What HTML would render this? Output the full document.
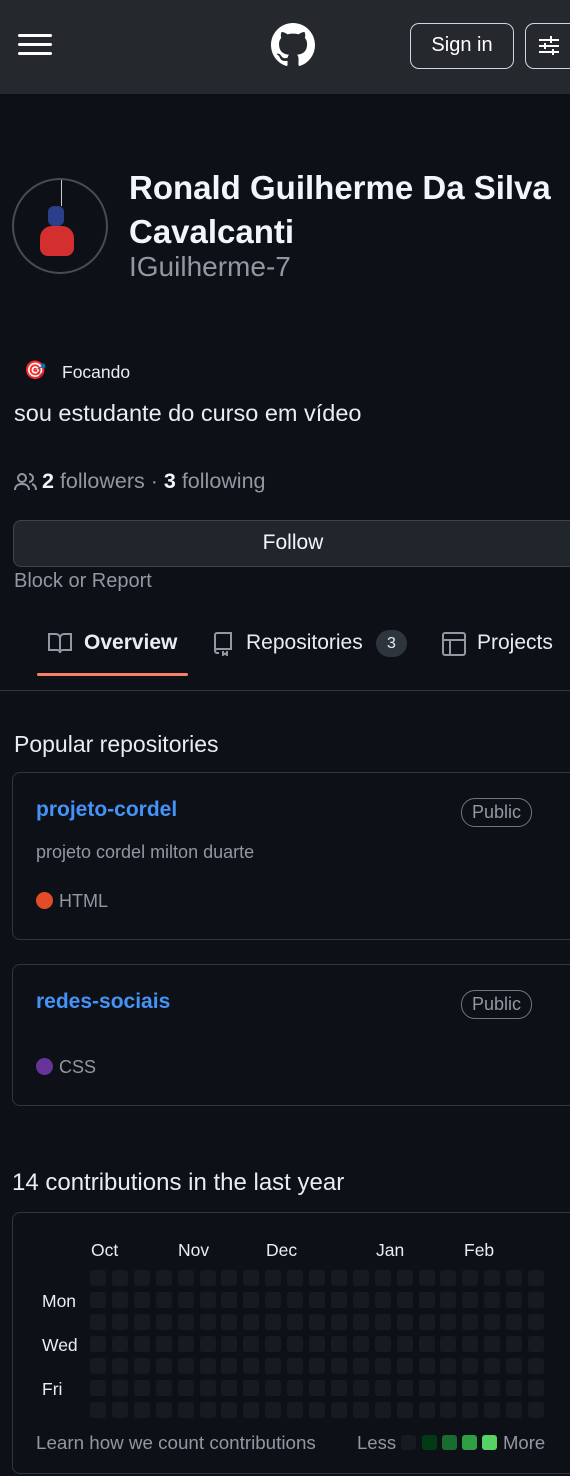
<!DOCTYPE html><html><head><meta charset="utf-8"><style>
*{box-sizing:border-box;margin:0;padding:0}
body{width:570px;height:1476px;background:#0d1117;color:#e6edf3;font-family:"Liberation Sans",sans-serif;position:relative;overflow:hidden}
.a{position:absolute}
.hdr{left:0;top:0;width:570px;height:94px;background:#25292e}
.btn{border:1.5px solid #d0d7de;border-radius:9px}
.card{border:1.5px solid #30363d;border-radius:8px;left:12px;width:570px}
.pub{border:1.5px solid #6e7681;border-radius:14px;color:#9198a1;font-size:18px;padding:3px 10px}
.cell{position:absolute;width:16px;height:16px;border-radius:3px;background:#161b22}
</style></head><body>
<div class="a hdr"></div>
<div class="a" style="left:18px;top:34px;width:34px;height:3px;background:#fff;border-radius:2px"></div>
<div class="a" style="left:18px;top:43px;width:34px;height:3px;background:#fff;border-radius:2px"></div>
<div class="a" style="left:18px;top:52px;width:34px;height:3px;background:#fff;border-radius:2px"></div>
<svg class="a" style="left:271px;top:23px" width="44" height="44" viewBox="0 0 16 16"><path fill="#fff" fill-rule="evenodd" d="M8 0C3.58 0 0 3.58 0 8c0 3.54 2.29 6.53 5.47 7.59.4.07.55-.17.55-.38 0-.19-.01-.82-.01-1.49-2.01.37-2.53-.49-2.69-.94-.09-.23-.48-.94-.82-1.13-.28-.15-.68-.52-.01-.53.63-.01 1.08.58 1.23.82.72 1.21 1.87.87 2.33.66.07-.52.28-.87.51-1.07-1.78-.2-3.64-.89-3.64-3.95 0-.87.31-1.59.82-2.15-.08-.2-.36-1.02.08-2.12 0 0 .67-.21 2.2.82.64-.18 1.32-.27 2-.27.68 0 1.36.09 2 .27 1.53-1.04 2.2-.82 2.2-.82.44 1.1.16 1.92.08 2.12.51.56.82 1.27.82 2.15 0 3.07-1.87 3.75-3.65 3.95.29.25.54.73.54 1.48 0 1.07-.01 1.93-.01 2.2 0 .21.15.46.55.38A8.013 8.013 0 0016 8c0-4.42-3.58-8-8-8z"/></svg>
<div class="a btn" style="left:410px;top:23px;width:104px;height:46px"></div>
<div class="a" style="left:410px;top:34px;width:104px;text-align:center;font-size:20px;color:#fff">Sign in</div>
<div class="a btn" style="left:525px;top:23px;width:60px;height:46px"></div>
<svg class="a" style="left:537px;top:34px" width="24" height="24" viewBox="0 0 24 24" stroke="#fff" stroke-width="2"><path d="M2 6h20M2 12h20M2 18h20M14 2v7M8 9v6M16 15v6"/></svg>
<div class="a" style="left:12px;top:178px;width:96px;height:96px;border-radius:50%;border:2px solid #444c56;background:#0d1117;overflow:hidden"><div class="a" style="left:26px;top:46px;width:34px;height:30px;background:#d32f2f;border-radius:12px 12px 8px 8px"></div><div class="a" style="left:34px;top:26px;width:16px;height:20px;background:#2a3f8a;border-radius:6px"></div><div class="a" style="left:47px;top:0;width:1px;height:26px;background:#ccc"></div></div>
<div class="a" style="left:129px;top:166px;font-size:33px;font-weight:bold;line-height:44px;color:#f0f6fc">Ronald Guilherme Da Silva<br>Cavalcanti</div>
<div class="a" style="left:129px;top:251px;font-size:28px;color:#9198a1">IGuilherme-7</div>
<div class="a" style="left:24px;top:360px;font-size:18px">🎯</div>
<div class="a" style="left:62px;top:362px;font-size:17.5px">Focando</div>
<div class="a" style="left:14px;top:400px;font-size:23.5px">sou estudante do curso em vídeo</div>
<svg class="a" style="left:14px;top:472px" width="24" height="20" viewBox="0 0 24 20" fill="none" stroke="#9198a1" stroke-width="2"><circle cx="8" cy="6" r="4"/><path d="M1 18c0-4 3-6 7-6s7 2 7 6M15 2a4 4 0 010 8M18 12c3 1 4 3 4 6"/></svg>
<div class="a" style="left:42px;top:469px;font-size:21.5px;color:#9198a1"><b style="color:#f0f6fc">2</b> followers · <b style="color:#f0f6fc">3</b> following</div>
<div class="a" style="left:13px;top:520px;width:570px;height:47px;background:#21262d;border:1.5px solid #3d444d;border-radius:8px"></div>
<div class="a" style="left:13px;top:531px;width:560px;text-align:center;font-size:21px;color:#f0f6fc">Follow</div>
<div class="a" style="left:14px;top:570px;font-size:20px;color:#9198a1">Block or Report</div>
<svg class="a" style="left:48px;top:632px" width="24" height="22" viewBox="0 0 24 22" fill="none" stroke="#9198a1" stroke-width="2"><path d="M1 2h7a4 4 0 014 4v15a3 3 0 00-3-3H1zM23 2h-7a4 4 0 00-4 4v15a3 3 0 013-3h8z"/></svg>
<div class="a" style="left:84px;top:631px;font-size:21px;font-weight:bold">Overview</div>
<div class="a" style="left:37px;top:673px;width:151px;height:3px;background:#f78166;border-radius:2px"></div>
<svg class="a" style="left:214px;top:632px" width="18" height="24" viewBox="0 0 18 24" fill="none" stroke="#9198a1" stroke-width="2"><path d="M1 19V3a2 2 0 012-2h14v16H3a2 2 0 000 4h2M9 19v4l2-1.5 2 1.5v-4"/></svg>
<div class="a" style="left:246px;top:631px;font-size:21px">Repositories</div>
<div class="a" style="left:376px;top:630px;width:31px;height:27px;border-radius:14px;background:#2f353d;text-align:center;font-size:16px;line-height:27px">3</div>
<svg class="a" style="left:442px;top:632px" width="24" height="24" viewBox="0 0 24 24" fill="none" stroke="#9198a1" stroke-width="2"><rect x="1" y="1" width="22" height="22" rx="2"/><path d="M1 8h22M8 8v15"/></svg>
<div class="a" style="left:477px;top:631px;font-size:21px">Projects</div>
<div class="a" style="left:0;top:690px;width:570px;height:1px;background:#30363d"></div>
<div class="a" style="left:14px;top:731px;font-size:23px">Popular repositories</div>
<div class="a card" style="top:772px;height:168px"></div>
<div class="a" style="left:36px;top:798px;font-size:21px;font-weight:bold;color:#4493f8">projeto-cordel</div>
<div class="a pub" style="left:461px;top:798px">Public</div>
<div class="a" style="left:36px;top:842px;font-size:18px;color:#9198a1">projeto cordel milton duarte</div>
<div class="a" style="left:36px;top:892px;width:17px;height:17px;border-radius:50%;background:#e34c26"></div>
<div class="a" style="left:59px;top:891px;font-size:18px;color:#9198a1">HTML</div>
<div class="a card" style="top:964px;height:142px"></div>
<div class="a" style="left:36px;top:990px;font-size:21px;font-weight:bold;color:#4493f8">redes-sociais</div>
<div class="a pub" style="left:461px;top:990px">Public</div>
<div class="a" style="left:36px;top:1058px;width:17px;height:17px;border-radius:50%;background:#663399"></div>
<div class="a" style="left:59px;top:1057px;font-size:18px;color:#9198a1">CSS</div>
<div class="a" style="left:12px;top:1169px;font-size:24px">14 contributions in the last year</div>
<div class="a card" style="top:1212px;height:262px"></div>
<div class="a" style="left:91px;top:1240px;font-size:17.5px">Oct</div>
<div class="a" style="left:178px;top:1240px;font-size:17.5px">Nov</div>
<div class="a" style="left:266px;top:1240px;font-size:17.5px">Dec</div>
<div class="a" style="left:376px;top:1240px;font-size:17.5px">Jan</div>
<div class="a" style="left:464px;top:1240px;font-size:17.5px">Feb</div>
<div class="a" style="left:42px;top:1291px;font-size:17.5px">Mon</div>
<div class="a" style="left:42px;top:1335px;font-size:17.5px">Wed</div>
<div class="a" style="left:42px;top:1379px;font-size:17.5px">Fri</div>
<div id="g"></div>
<script>
var h='';for(var c=0;c<21;c++)for(var r=0;r<7;r++)h+='<div class="cell" style="left:'+(90+c*21.9)+'px;top:'+(1270+r*22)+'px"></div>';document.getElementById('g').innerHTML=h;
</script>
<div class="a" style="left:36px;top:1432px;font-size:18.8px;color:#9198a1">Learn how we count contributions</div>
<div class="a" style="left:357px;top:1432px;font-size:18.5px;color:#9198a1">Less</div>
<div class="cell" style="left:401px;top:1435px;width:15px;height:15px"></div>
<div class="cell" style="left:422px;top:1435px;width:15px;height:15px;background:#033a16"></div>
<div class="cell" style="left:442px;top:1435px;width:15px;height:15px;background:#196c2e"></div>
<div class="cell" style="left:462px;top:1435px;width:15px;height:15px;background:#2ea043"></div>
<div class="cell" style="left:482px;top:1435px;width:15px;height:15px;background:#56d364"></div>
<div class="a" style="left:503px;top:1432px;font-size:18.5px;color:#9198a1">More</div>
</body></html>
